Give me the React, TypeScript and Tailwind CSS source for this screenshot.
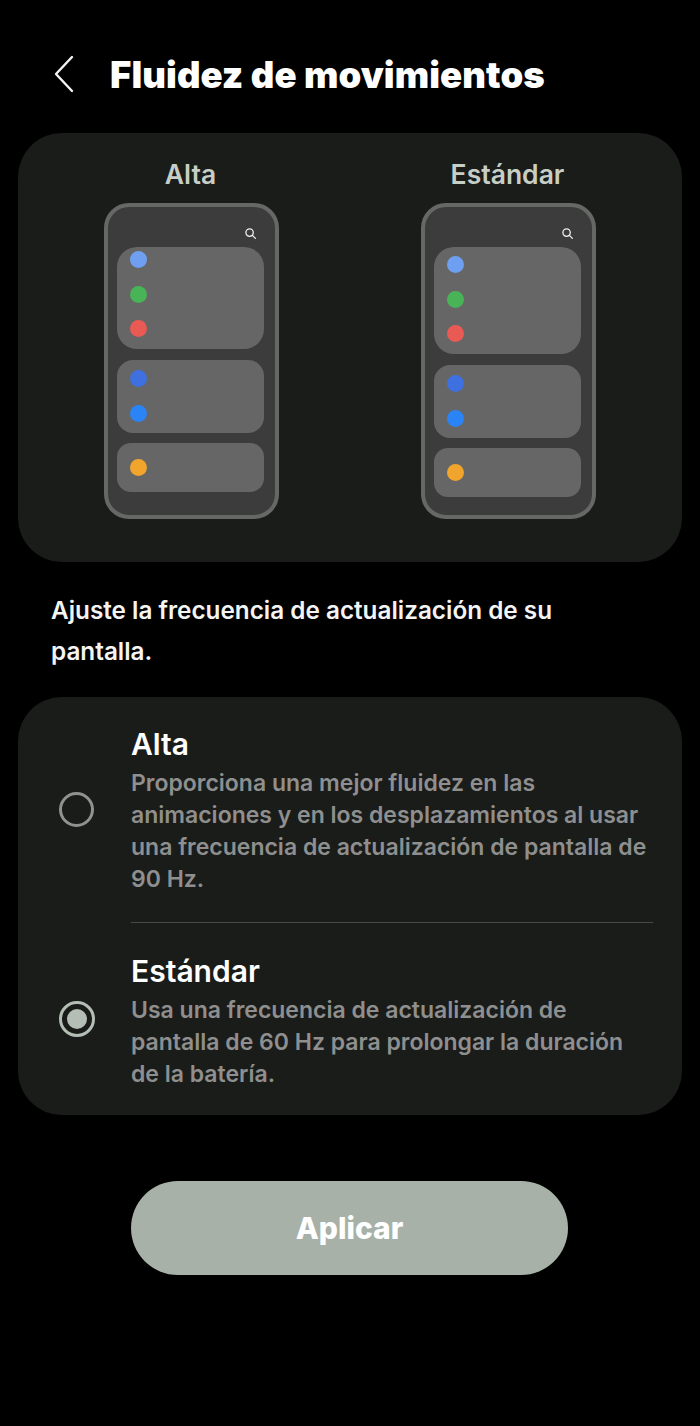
import React from "react";

function Phone({ shift }: { shift: boolean }) {
  return (
    <div className="w-[175px] h-[316px] rounded-[25px] border-[4px] border-[#666866] bg-[#3c3c3c] flex flex-col items-start pl-[9px]">
      <div className="w-[147px] h-[40px] flex justify-end items-end pb-[7px] pr-[7px]">
        <svg width="13" height="13" viewBox="0 0 13 13" fill="none" stroke="#f0f0f0" strokeWidth="1.3" strokeLinecap="round">
          <circle cx="5.6" cy="5.6" r="3.7" />
          <path d="M8.4 8.4 L11.4 11.4" />
        </svg>
      </div>
      <div className={`w-[147px] ${shift ? "h-[107px]" : "h-[102px]"} rounded-[20px] bg-[#666666] flex flex-col pl-[12.5px] ${shift ? "pt-[9px]" : "pt-[4px]"} gap-[17.5px]`}>
        <span className="w-[17px] h-[17px] rounded-full bg-[#6f9ff0]" />
        <span className="w-[17px] h-[17px] rounded-full bg-[#49b457]" />
        <span className="w-[17px] h-[17px] rounded-full bg-[#ea5a55]" />
      </div>
      <div className="mt-[11px] w-[147px] h-[73px] rounded-[16px] bg-[#666666] flex flex-col pl-[12.5px] pt-[10px] gap-[18px]">
        <span className="w-[17px] h-[17px] rounded-full bg-[#3f70e0]" />
        <span className="w-[17px] h-[17px] rounded-full bg-[#2b84f5]" />
      </div>
      <div className="mt-[10px] w-[147px] h-[49px] rounded-[14px] bg-[#666666] flex items-center pl-[12.5px]">
        <span className="w-[17px] h-[17px] rounded-full bg-[#f2a52c]" />
      </div>
    </div>
  );
}

export default function App() {
  return (
    <div className="w-[700px] h-[1426px] bg-black flex flex-col font-['Inter','Liberation_Sans',sans-serif]">
      <div className="h-[133px] shrink-0 flex items-start pt-[54px]">
        <svg className="ml-[53px] shrink-0" width="22" height="40" viewBox="0 0 22 40" fill="none" stroke="#f4f4f4" strokeWidth="2.4" strokeLinecap="round" strokeLinejoin="round">
          <path d="M19 3 L3 20 L19 37" />
        </svg>
        <h1 className="ml-[35px] text-[36.5px] leading-[42px] font-black text-white tracking-[0.07px] whitespace-nowrap">Fluidez de movimientos</h1>
      </div>

      <div className="mx-[18px] h-[429px] rounded-[44px] bg-[#1a1c1a] flex justify-between pl-[86px] pr-[86px] pt-[24px]">
        <div className="flex flex-col items-center w-[175px]">
          <div className="h-[46px] text-[26.5px] leading-[34px] font-semibold text-[#c6cec6] -translate-x-px">Alta</div>
          <Phone shift={false} />
        </div>
        <div className="flex flex-col items-center w-[175px]">
          <div className="h-[46px] text-[26.5px] leading-[34px] font-semibold text-[#c6cec6] whitespace-nowrap -translate-x-px">Estándar</div>
          <Phone shift={true} />
        </div>
      </div>

      <p className="mt-[28px] mx-[51px] text-[24.3px] leading-[41px] font-semibold text-[#f4f4f4] w-[560px]">
        Ajuste la frecuencia de actualización de su pantalla.
      </p>

      <div className="mt-[25px] mx-[18px] h-[418px] rounded-[44px] bg-[#1a1c1a] flex flex-col">
        <div className="h-[225px] flex">
          <div className="w-[113px] shrink-0 flex items-center pl-[41px]">
            <span className="block w-[35px] h-[35px] rounded-full border-[3px] border-[#8f928f]" />
          </div>
          <div className="pt-[29px] w-[522px]">
            <div className="text-[30px] leading-[36px] font-semibold text-white">Alta</div>
            <div className="mt-[5px] text-[23px] leading-[32px] font-semibold text-[#8e8f8e]">
              Proporciona una mejor fluidez en las animaciones y en los desplazamientos al usar una frecuencia de actualización de pantalla de 90 Hz.
            </div>
          </div>
        </div>
        <div className="ml-[113px] mr-[29px] h-px bg-[#484a48]" />
        <div className="flex-1 flex">
          <div className="w-[113px] shrink-0 flex items-center pl-[41px]">
            <span className="flex items-center justify-center w-[36px] h-[36px] rounded-full border-[3px] border-[#b4beb4]">
              <span className="w-[20px] h-[20px] rounded-full bg-[#b4beb4]" />
            </span>
          </div>
          <div className="pt-[30px] w-[522px]">
            <div className="text-[30px] leading-[36px] font-semibold text-white">Estándar</div>
            <div className="mt-[5px] text-[23px] leading-[32px] font-semibold text-[#8e8f8e]">
              Usa una frecuencia de actualización de pantalla de 60 Hz para prolongar la duración de la batería.
            </div>
          </div>
        </div>
      </div>

      <button className="mt-[66px] ml-[131px] w-[437px] h-[94px] rounded-full bg-[#a7b1a7] flex items-center justify-center text-[30px] font-extrabold text-white">
        Aplicar
      </button>
    </div>
  );
}
